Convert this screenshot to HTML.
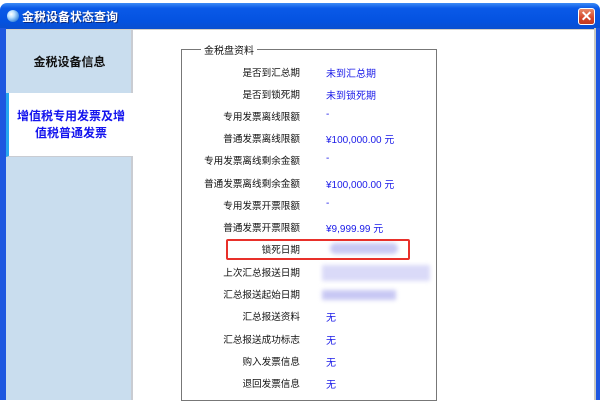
<!DOCTYPE html>
<html><head><meta charset="utf-8"><style>
*{margin:0;padding:0;box-sizing:border-box}
body{width:600px;height:400px;overflow:hidden;background:#fff;position:relative;font-family:"Liberation Sans","Noto Sans CJK SC","WenQuanYi Zen Hei",sans-serif;font-size:11px;color:#111}
.abs{position:absolute}
#title{left:0;top:3px;width:600px;height:26px;border-radius:7px 7px 0 0;background:linear-gradient(#3d8bf5 0%,#0a5ae8 20%,#0452e0 70%,#0a4fd0 100%)}
#ttext{left:22px;top:8px;color:#fff;font-weight:bold;font-size:12px;text-shadow:1px 1px 0 #0a2a80}
#ico{left:7px;top:10px;width:12px;height:12px;border-radius:50%;background:radial-gradient(circle at 35% 35%,#fff 0,#bfe3ff 30%,#2a7ad8 80%)}
#close{left:578px;top:8px;width:17px;height:17px;border:1px solid #fff;border-radius:3px;background:linear-gradient(#e88a6a,#d5462a 60%,#c23a20);color:#fff;font-size:14px;line-height:14px;text-align:center;font-weight:bold}
#lb{left:0;top:28px;width:6px;height:372px;background:#1e57e0}
#rb{left:594px;top:28px;width:6px;height:372px;background:#1e57e0;border-left:2px solid #c9c9c0}
#content{left:6px;top:28px;width:588px;height:372px;background:#fff;border-top:2px solid #d4d0c8}
#panel{left:6px;top:30px;width:127px;height:370px;background:#c9ddee;border-right:2px solid #c9ccd2}
#tab2{left:6px;top:93px;width:127px;height:64px;background:#fff;border-left:3px solid #27a7f0;border-bottom:1px solid #c9ccd2}
.tab{text-align:center;font-weight:bold;font-size:12px}
#g{left:181px;top:49px;width:256px;height:352px;border:1px solid #777}
#leg{left:201px;top:42px;background:#fff;padding:0 3px;font-size:10px}
.l{position:absolute;right:300px;text-align:right;white-space:nowrap;font-size:9.6px}
.v{position:absolute;left:326px;color:#1a1ae8;white-space:nowrap;font-size:10px}
#red{left:226px;top:239px;width:184px;height:21px;border:2px solid #e8302a;border-radius:2px}
.blur{position:absolute;background:#c8c8f4;filter:blur(2px)}
</style></head><body>
<div id="content" class="abs"></div>
<div id="title" class="abs"></div>
<div id="ico" class="abs"></div>
<div id="ttext" class="abs">金税设备状态查询</div>
<div id="close" class="abs">✕</div>
<div id="lb" class="abs"></div>
<div id="rb" class="abs"></div>
<div id="panel" class="abs"></div>
<div class="abs tab" style="left:6px;top:53px;width:127px">金税设备信息</div>
<div id="tab2" class="abs"></div>
<div class="abs tab" style="left:9px;top:108px;width:124px;color:#1414ee;line-height:17px">增值税专用发票及增<br>值税普通发票</div>
<div id="g" class="abs"></div>
<div id="leg" class="abs">金税盘资料</div>
<div style="position:absolute;left:0;top:0;width:600px">
<div class="l" style="top:65px">是否到汇总期</div><div class="v" style="top:65px">未到汇总期</div>
<div class="l" style="top:87px">是否到锁死期</div><div class="v" style="top:87px">未到锁死期</div>
<div class="l" style="top:109px">专用发票离线限额</div><div class="v" style="top:109px">-</div>
<div class="l" style="top:131px">普通发票离线限额</div><div class="v" style="top:131px">¥100,000.00 元</div>
<div class="l" style="top:153px">专用发票离线剩余金额</div><div class="v" style="top:153px">-</div>
<div class="l" style="top:176px">普通发票离线剩余金额</div><div class="v" style="top:176px">¥100,000.00 元</div>
<div class="l" style="top:198px">专用发票开票限额</div><div class="v" style="top:198px">-</div>
<div class="l" style="top:220px">普通发票开票限额</div><div class="v" style="top:220px">¥9,999.99 元</div>
<div class="l" style="top:242px">锁死日期</div>
<div class="l" style="top:265px">上次汇总报送日期</div>
<div class="l" style="top:287px">汇总报送起始日期</div>
<div class="l" style="top:309px">汇总报送资料</div><div class="v" style="top:309px">无</div>
<div class="l" style="top:332px">汇总报送成功标志</div><div class="v" style="top:332px">无</div>
<div class="l" style="top:354px">购入发票信息</div><div class="v" style="top:354px">无</div>
<div class="l" style="top:376px">退回发票信息</div><div class="v" style="top:376px">无</div>
</div>
<div class="blur" style="left:330px;top:243px;width:68px;height:11px;border-radius:6px"></div>
<div class="blur" style="left:322px;top:265px;width:108px;height:16px;background:#dadaf8"></div>
<div class="blur" style="left:322px;top:290px;width:74px;height:10px"></div>
<div id="red" class="abs"></div>
</body></html>
